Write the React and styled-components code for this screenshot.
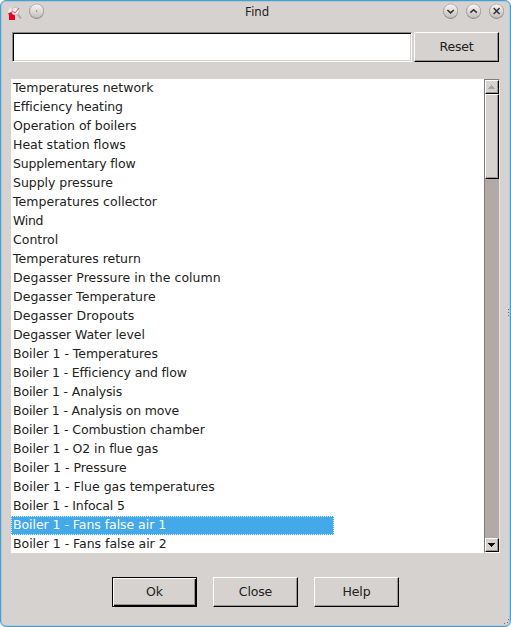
import React from 'react';
import styled, { createGlobalStyle, css } from 'styled-components';

const Global = createGlobalStyle`
  * { box-sizing: border-box; }
  body { margin: 0; background: #fff; overflow: hidden; }
`;

const Window = styled.div`
  position: relative;
  display: flex;
  flex-direction: column;
  width: 511px;
  height: 627px;
  padding: 0 10px;
  background: #d6d2cf;
  border: 1px solid #4f9dcb;
  border-radius: 6px;
  box-shadow: inset 0 0 0 1px #a9c8dc;
  font: 12.5px/19px 'DejaVu Sans', sans-serif;
  color: #222;
`;

const TitleBar = styled.header`
  display: grid;
  grid-template-columns: 64px 1fr 63px;
  align-items: center;
  height: 22px;
  margin: 0 -5px;
`;

const Title = styled.h1`
  margin: 0;
  padding-left: 2px;
  text-align: center;
  font: 12px/20px 'Noto Sans', sans-serif;
`;

const Controls = styled.div`
  display: flex;
  gap: 7px;
  align-items: center;
  height: 21px;
  align-self: start;
  justify-content: ${(p) => (p.$end ? 'flex-end' : 'flex-start')};
`;

const SearchRow = styled.div`
  display: flex;
  gap: 2px;
  margin: 9px 0 0 1px;
`;

const SearchInput = styled.input`
  width: 400px;
  height: 30px;
  padding: 0 4px;
  outline: none;
  background: #fff;
  border: 1px solid;
  border-color: #8f8986 #fff #fff #8f8986;
  border-radius: 0;
  box-shadow: inset 1px 1px #000, inset -1px -1px #d6d2cf;
  font: inherit;
`;

const bevel = css`
  border: 1px solid;
  border-color: #fff #000 #000 #fff;
  box-shadow: inset -1px -1px #9a9592;
  background: #d6d2cf;
`;

const Button = styled.button`
  ${bevel}
  width: 85px;
  height: 30px;
  padding: 0 0 1px;
  font: inherit;
  letter-spacing: -0.15px;
  color: inherit;
  ${(p) =>
    p.$primary &&
    css`
      border-color: #000;
      box-shadow: inset 1px 1px #fff, inset -1px -1px #000, inset -2px -2px #9a9592;
    `}
`;

const ListPanel = styled.div`
  display: flex;
  width: 489px;
  height: 474px;
  margin-top: 17px;
  background: #fff;
`;

const List = styled.ul`
  width: 473px;
  margin: 0;
  padding: 0;
  list-style: none;
  overflow: hidden;
`;

const Item = styled.li`
  width: 323px;
  height: 19px;
  padding-left: 2px;
  line-height: 18px;
  letter-spacing: ${(p) => p.$tracking}px;
  font-variant-ligatures: ${(p) => (p.$tracking ? 'none' : 'normal')};
  white-space: nowrap;
  ${(p) =>
    p.$selected &&
    css`
      padding-left: 1px;
      line-height: 16px;
      color: #fff;
      background: #43a9e8;
      border: 1px dotted #d9effb;
    `}
`;

const ScrollBar = styled.div`
  display: flex;
  flex-direction: column;
  width: 16px;
  height: 474px;
  background: #b3aaa7;
  border: 1px solid;
  border-color: #807b78 #e9e7e5 #fff #807b78;
`;

const ScrollArrow = styled.div`
  ${bevel}
  display: flex;
  justify-content: center;
  align-items: center;
  height: 14px;
  padding-right: 1px;
  margin-top: ${(p) => (p.$bottom ? 'auto' : 0)};
`;

const Thumb = styled.div`
  ${bevel}
  height: 85px;
`;

const Footer = styled.footer`
  display: flex;
  gap: 16px;
  margin: 24px 0 0 101px;
`;

const Grip = styled.svg`
  position: absolute;
  right: 0;
  bottom: ${(p) => p.$bottom}px;
`;

const items = [
  ['Temperatures network', 0],
  ['Efficiency heating', -0.11],
  ['Operation of boilers', -0.03],
  ['Heat station flows', 0],
  ['Supplementary flow', -0.17],
  ['Supply pressure', -0.04],
  ['Temperatures collector', 0.03],
  ['Wind', -0.3],
  ['Control', 0],
  ['Temperatures return', 0],
  ['Degasser Pressure in the column', 0.06],
  ['Degasser Temperature', 0.04],
  ['Degasser Dropouts', 0.09],
  ['Degasser Water level', -0.08],
  ['Boiler 1 - Temperatures', -0.05],
  ['Boiler 1 - Efficiency and flow', -0.14],
  ['Boiler 1 - Analysis', -0.15],
  ['Boiler 1 - Analysis on move', -0.16],
  ['Boiler 1 - Combustion chamber', -0.1],
  ['Boiler 1 - O2 in flue gas', -0.08],
  ['Boiler 1 - Pressure', 0],
  ['Boiler 1 - Flue gas temperatures', 0],
  ['Boiler 1 - Infocal 5', -0.1],
  ['Boiler 1 - Fans false air 1', -0.05],
  ['Boiler 1 - Fans false air 2', -0.03],
];

const glyphs = {
  down: 'M4.8 7 8 9.9 11.2 7',
  up: 'M4.8 9.6 8 6.7 11.2 9.6',
  close: 'M5 5 11 11M11 5 5 11',
};

const RoundButton = ({ kind }) => (
  <svg width="16" height="17" viewBox="0 0 16 17">
    <defs>
      <linearGradient id={`face-${kind}`} x2="0" y2="1">
        <stop offset="0" stopColor="#f8f7f6" />
        <stop offset="1" stopColor="#c2bfbd" />
      </linearGradient>
    </defs>
    <g transform="translate(-.4 0)">
      <circle cx="8" cy="8.6" r="7.4" fill="#85817f" />
      <circle cx="8" cy="8" r="7" fill={`url(#face-${kind})`} stroke="#aaa6a3" strokeWidth=".7" />
      {glyphs[kind] ? (
        <path d={glyphs[kind]} fill="none" stroke="#303030" strokeWidth="1.5" />
      ) : (
        <circle cx="8" cy="8" r=".8" fill="#777" />
      )}
    </g>
  </svg>
);

const AppIcon = () => (
  <svg width="16" height="18" viewBox="-1 -3 16 18">
    <path d="m3 1 3 4-5 2z" fill="#f2eeee" />
    <path d="M1 7.5 4 6l4 2v6H2V9z" fill="#e3061f" />
    <path d="m10.5 8 3.5 4.5" stroke="#aaa" strokeWidth="2" />
    <circle cx="8.5" cy="5.2" r="3.8" fill="#f4eeee" stroke="#c5bfbf" />
    <path d="m5 5 3 2 4-5" fill="none" stroke="#e35365" />
  </svg>
);

const Arrow = ({ up }) => (
  <svg width="7" height="4" viewBox="0 0 7 4" shapeRendering="crispEdges">
    <path
      d={up ? 'M3 0h1v1h1v1h1v1h1v1H0V3h1V2h1V1h1z' : 'M0 0h7v1H6v1H5v1H4v1H3V3H2V2H1V1H0z'}
      fill={up ? '#aaa5a2' : '#111'}
    />
  </svg>
);

export default function App() {
  return (
    <>
      <Global />
      <Window>
        <TitleBar>
          <Controls><AppIcon /><RoundButton kind="dot" /></Controls>
          <Title>Find</Title>
          <Controls $end>
            <RoundButton kind="down" /><RoundButton kind="up" /><RoundButton kind="close" />
          </Controls>
        </TitleBar>
        <SearchRow>
          <SearchInput aria-label="Find" />
          <Button>Reset</Button>
        </SearchRow>
        <ListPanel>
          <List>
            {items.map(([name, tracking], i) => (
              <Item key={name} $tracking={tracking} $selected={i === 23}>{name}</Item>
            ))}
          </List>
          <ScrollBar>
            <ScrollArrow><Arrow up /></ScrollArrow>
            <Thumb />
            <ScrollArrow $bottom><Arrow /></ScrollArrow>
          </ScrollBar>
        </ListPanel>
        <Footer>
          <Button $primary>Ok</Button>
          <Button>Close</Button>
          <Button>Help</Button>
        </Footer>
        <Grip $bottom={309} width="3" height="8" viewBox="0 0 3 8">
          <path d="M1 0h1v1H1zM1 3h1v1H1zM1 6h1v1H1z" fill="#716d6b" />
        </Grip>
        <Grip $bottom={0} width="8" height="8" viewBox="0 0 8 8">
          <path d="M6 1h1v1H6zM5 4h1v1H5zM2 5h1v1H2z" fill="#716d6b" />
        </Grip>
      </Window>
    </>
  );
}
